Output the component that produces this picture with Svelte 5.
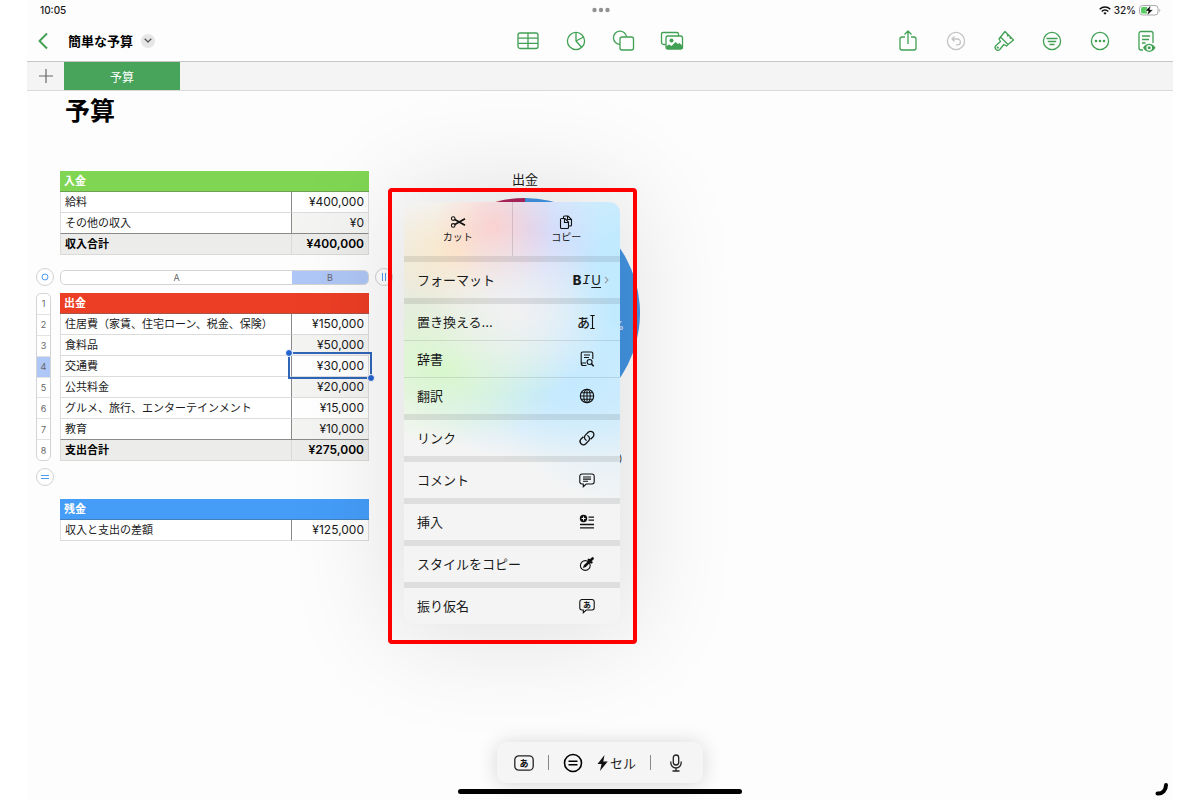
<script lang="ts">
    type Row = { label: string; value: string; total?: boolean; selected?: boolean };

    const income: Row[] = [
        {label: "給料", value: "¥400,000"},
        {label: "その他の収入", value: "¥0"},
        {label: "収入合計", value: "¥400,000", total: true},
    ];

    const expenses: Row[] = [
        {label: "住居費（家賃、住宅ローン、税金、保険）", value: "¥150,000"},
        {label: "食料品", value: "¥50,000"},
        {label: "交通費", value: "¥30,000", selected: true},
        {label: "公共料金", value: "¥20,000"},
        {label: "グルメ、旅行、エンターテインメント", value: "¥15,000"},
        {label: "教育", value: "¥10,000"},
        {label: "支出合計", value: "¥275,000", total: true},
    ];

    const balance: Row[] = [{label: "収入と支出の差額", value: "¥125,000"}];

    const menu = [
        {label: "フォーマット", icon: "biu"},
        {label: "置き換える...", icon: "replace"},
        {label: "辞書", icon: "dictionary", thin: true},
        {label: "翻訳", icon: "globe", thin: true},
        {label: "リンク", icon: "link"},
        {label: "コメント", icon: "comment"},
        {label: "挿入", icon: "insert"},
        {label: "スタイルをコピー", icon: "style"},
        {label: "振り仮名", icon: "furigana"},
    ];

    const amounts = [150, 50, 30, 20, 15, 10];
    const colors = ["#4294e2", "#6cc04a", "#f4c63d", "#ee7f2d", "#d8412f", "#b0265e"];
    const sum = amounts.reduce((a, b) => a + b, 0);

    function point(share: number) {
        const a = share * 2 * Math.PI;
        return `${(115 + 115 * Math.sin(a)).toFixed(2)} ${(115 - 115 * Math.cos(a)).toFixed(2)}`;
    }

    let start = 0;
    const slices = amounts.map((amount, i) => {
        const from = start;
        start += amount / sum;
        const large = amount / sum > 0.5 ? 1 : 0;
        return {d: `M115 115L${point(from)}A115 115 0 ${large} 1 ${point(start)}Z`, color: colors[i]};
    });
</script>

{#snippet sheetTable(title: string, rows: Row[], tone: string)}
    <table class={tone}>
        <colgroup>
            <col>
            <col class="amount">
        </colgroup>
        <thead>
        <tr><th colspan="2">{title}</th></tr>
        </thead>
        <tbody>
        {#each rows as row}
            <tr class:total={row.total}>
                <td class="label">{row.label}</td>
                <td class="value" class:selected={row.selected}>{row.value}{#if row.selected}<span class="selection"><i></i><i></i></span>{/if}</td>
            </tr>
        {/each}
        </tbody>
    </table>
{/snippet}

{#snippet menuIcon(name: string)}
    {#if name === "biu"}
        <span class="biu"><b>B</b><em>I</em><u>U</u></span>
        <svg class="more" width="5" height="8" viewBox="0 0 5 8"><path d="M1 .8l3 3.2-3 3.2"/></svg>
    {:else if name === "replace"}
        <span class="replace">あ<svg width="5" height="16" viewBox="0 0 5 16"><path d="M.3 1.5h4.4M.3 14.5h4.4M2.5 1.5v13"/></svg></span>
    {:else}
        <svg width="16" height="16" viewBox="0 0 16 16">
            {#if name === "dictionary"}
                <path d="M7.500 14.500H4.200a2 2 0 0 1-2-2v-10A1.500 1.500 0 0 1 3.700 1h8.600a1.500 1.500 0 0 1 1.500 1.500V8M2.400 12h4.600M5 4h6M5 6.500h5"/>
                <circle cx="10.600" cy="11" r="2.500"/>
                <path d="M12.400 12.900l2.300 2.300" stroke-width="1.500"/>
            {:else if name === "globe"}
                <circle cx="8" cy="8" r="6.700"/>
                <ellipse cx="8" cy="8" rx="3.200" ry="6.700"/>
                <path d="M8 1.300v13.400M1.300 8h13.400M2.300 4.700h11.400M2.300 11.300h11.400"/>
            {:else if name === "link"}
                <path d="M7.700 10.500a3.300 3.300 0 0 1-1.300-5.400l2.800-2.800a3.300 3.300 0 0 1 4.700 4.700l-2.300 2.300M8.300 5.500a3.300 3.300 0 0 1 1.300 5.400l-2.800 2.800a3.300 3.300 0 0 1-4.700-4.700l2.300-2.300" stroke-width="1.300"/>
            {:else if name === "comment"}
                <path d="M3 2h10a2.200 2.200 0 0 1 2.200 2.200v5.600A2.200 2.200 0 0 1 13 12H7.200l-2.900 2.700V12H3A2.200 2.200 0 0 1 .8 9.800V4.200A2.200 2.200 0 0 1 3 2z"/>
                <path d="M4 5h8M4 7.100h8M4 9.200h5"/>
            {:else if name === "insert"}
                <circle cx="4.500" cy="4.500" r="3.700" fill="#111" stroke="none"/>
                <path d="M4.500 2.500v4M2.500 4.500h4" stroke="#f4f4f4"/>
                <path d="M9.500 3.200h5.500M9.500 6.200h5.500M1 10.500h14M1 13.800h14" stroke-width="1.300"/>
            {:else if name === "style"}
                <circle cx="6.300" cy="9.500" r="4.900"/>
                <path d="M3.800 12l1.200-3 5-4.800 1.800 1.800L6.800 11z" fill="#111" stroke="none"/>
                <path d="M9.800 3.800l2.600 2.600M11.700 4.400l1.900-1.900" stroke-width="2.600" stroke-linecap="round"/>
            {:else if name === "furigana"}
                <path d="M3 1.500h10a2.200 2.200 0 0 1 2.200 2.200v6.100A2.200 2.200 0 0 1 13 12H7.200l-2.900 2.700V12H3A2.200 2.200 0 0 1 .8 9.800V3.700A2.200 2.200 0 0 1 3 1.500z"/>
                <text x="8" y="9.700" text-anchor="middle" font-size="8" font-weight="700">あ</text>
            {/if}
        </svg>
    {/if}
{/snippet}

<div class="app">
    <header>
        <div class="status">
            <span>10:05</span>
            <svg width="18" height="6" viewBox="0 0 18 6" fill="#929292"><circle cx="2.500" cy="3" r="2.200"/><circle cx="9" cy="3" r="2.200"/><circle cx="15.500" cy="3" r="2.200"/></svg>
            <div class="power">
                <svg width="12" height="9" viewBox="0 0 12 9" fill="none" stroke="#111" stroke-width="1.500"><path d="M.7 3.300a7.500 7.500 0 0 1 10.600 0M2.700 5.400a4.600 4.600 0 0 1 6.600 0"/><path d="M6 8.700L4.400 7.100a2.300 2.300 0 0 1 3.200 0z" fill="#111" stroke="none"/></svg>
                <span>32%</span>
                <svg width="22" height="11" viewBox="0 0 22 11"><rect x=".5" y=".5" width="18.500" height="9.500" rx="3" fill="#fff" stroke="#aaa"/><path d="M3.500 2H8v6.500H3.500A1.500 1.500 0 0 1 2 7V3.500A1.500 1.500 0 0 1 3.500 2z" fill="#57cb61"/><path d="M20.300 3.700v3.200c1.400-.5 1.400-2.700 0-3.200z" fill="#aaa"/><path d="M11.800.3L6.300 6h3L8.200 10.500 14 4.700h-3.200z" fill="#000" stroke="#fff" stroke-width=".5"/></svg>
            </div>
        </div>

        <div class="toolbar">
            <div class="group">
                <button class="back" aria-label="戻る"><svg width="10" height="18" viewBox="0 0 10 18"><path d="M9 1.500L1.500 9 9 16.500" stroke-width="2"/></svg></button>
                <h2>簡単な予算</h2>
                <button class="chevron" aria-label="書類メニュー"><svg width="8" height="5" viewBox="0 0 8 5"><path d="M.7.7L4 4 7.300.7" stroke="#555"/></svg></button>
            </div>
            <div class="group tools">
                <button aria-label="表"><svg width="24" height="24" viewBox="0 0 24 24"><rect x="2" y="4" width="20" height="15.500" rx="2"/><path d="M2 9.200h20M2 14.400h20M12 4v15.500"/></svg></button>
                <button aria-label="グラフ"><svg width="24" height="24" viewBox="0 0 24 24"><circle cx="12" cy="12" r="8.600"/><path d="M12 3.400V12l5.500 6.300M12 12l7.500-4"/></svg></button>
                <button aria-label="図形"><svg width="24" height="24" viewBox="0 0 24 24"><path d="M8 15.300a6.600 6.600 0 1 1 6.600-7.300"/><rect x="8" y="8" width="13.500" height="13" rx="2"/></svg></button>
                <button aria-label="メディア"><svg width="24" height="24" viewBox="0 0 24 24"><path d="M5.500 15.500h-2A2 2 0 0 1 1.500 13.500V5a1.500 1.500 0 0 1 1.500-1.500h14A1.500 1.500 0 0 1 18.500 5v2"/><rect x="6" y="7" width="16.500" height="13" rx="2"/><circle cx="11.500" cy="11.500" r="2" fill="#41a054" stroke="none"/><path d="M6 17.500l3-2 2.500 1.500 4-4 2.500 2 1.500-1 3 3V20H7z" fill="#41a054" stroke="none"/></svg></button>
            </div>
            <div class="group actions">
                <button aria-label="共有"><svg width="24" height="24" viewBox="0 0 24 24"><path d="M9 8H6a2 2 0 0 0-2 2v9a2 2 0 0 0 2 2h12a2 2 0 0 0 2-2v-9a2 2 0 0 0-2-2h-3M12 15V2.500M8.500 5.500L12 2l3.500 3.500"/></svg></button>
                <button class="muted" aria-label="取り消す"><svg width="24" height="24" viewBox="0 0 24 24"><circle cx="12" cy="12" r="8.600"/><path d="M10.500 7.500L8 10l2.500 2.500M8 10h5.500a2.900 2.900 0 0 1 0 5.800H12"/></svg></button>
                <button aria-label="フォーマット"><svg width="24" height="24" viewBox="0 0 24 24"><path d="M13 2.500l8.500 8.500-5.500 4.500-7.500-7.500zM15 4.500l1 3M18 7.500l.5 2.500M8.500 8L7 10l1.500 2.500L4 16.500a2.700 2.700 0 0 0 3.800 4l4-5 2.700 1.500 1.500-1.500"/><circle cx="5.800" cy="18.600" r=".5"/></svg></button>
                <button aria-label="整理"><svg width="24" height="24" viewBox="0 0 24 24"><circle cx="12" cy="12" r="8.600"/><path d="M6.500 9.500h11M7.800 12.500h8.400M9.500 15.500h5"/></svg></button>
                <button aria-label="その他"><svg width="24" height="24" viewBox="0 0 24 24"><circle cx="12" cy="12" r="8.600"/><g fill="#41a054" stroke="none"><circle cx="8" cy="12" r="1.300"/><circle cx="12" cy="12" r="1.300"/><circle cx="16" cy="12" r="1.300"/></g></svg></button>
                <button aria-label="閲覧表示"><svg width="20" height="24" viewBox="0 0 20 24"><path d="M7 21H5a2 2 0 0 1-2-2V4.500a2 2 0 0 1 2-2h10a2 2 0 0 1 2 2V14M6 7h8M6 10.500h7M6 14h3.500"/><path d="M7 18.800c3-5.500 9.500-5.500 12.500 0-3 5.500-9.500 5.500-12.500 0z" fill="#41a054" stroke="none"/><circle cx="13.200" cy="18.800" r="2.200" fill="#41a054" stroke="#fff"/></svg></button>
            </div>
        </div>

        <nav>
            <button class="add" aria-label="シートを追加"><svg width="14" height="14" viewBox="0 0 14 14"><path d="M7 0v14M0 7h14" stroke="#666" stroke-width="1.200"/></svg></button>
            <button class="tab">予算</button>
        </nav>
    </header>

    <main>
        <div class="sheet">
            <h1>予算</h1>
            <div class="income">{@render sheetTable("入金", income, "green")}</div>
            <button class="knob" aria-label="表を移動"><svg width="8" height="8" viewBox="0 0 8 8"><circle cx="4" cy="4" r="3"/></svg></button>
            <div class="columns"><button>A</button><button class="active">B</button></div>
            <button class="knob" aria-label="列を追加"><svg width="8" height="8" viewBox="0 0 8 8"><path d="M2.500 0v8M5.500 0v8"/></svg></button>
            <div class="rows">
                {#each [1, 2, 3, 4, 5, 6, 7, 8] as n}
                    <button class:active={n === 4}>{n}</button>
                {/each}
            </div>
            <div class="expenses">{@render sheetTable("出金", expenses, "red")}</div>
            <button class="knob end" aria-label="行を追加"><svg width="8" height="8" viewBox="0 0 8 8"><path d="M0 2.500h8M0 5.500h8"/></svg></button>
            <div class="balance">{@render sheetTable("残金", balance, "blue")}</div>
        </div>

        <figure>
            <figcaption>出金</figcaption>
            <svg width="230" height="230" viewBox="0 0 230 230">
                {#each slices as slice}
                    <path d={slice.d} fill={slice.color}/>
                {/each}
                <text class="share" x="214" y="132" text-anchor="end">55%</text>
            </svg>
            <p>住居費（家賃、住宅ローン、税金、保険）</p>
        </figure>

        <div class="frame">
            <div class="menu">
                <div class="top">
                    <button>
                        <svg width="16" height="14" viewBox="0 0 16 14"><circle cx="3.200" cy="3.600" r="1.800"/><circle cx="3.200" cy="10.400" r="1.800"/><path d="M4.800 4.500L15 10.300M4.800 9.500L15 3.700" stroke-width="1.700"/></svg>
                        カット
                    </button>
                    <button>
                        <svg width="14" height="14" viewBox="0 0 14 14"><path d="M4.500 3.500V2a1 1 0 0 1 1-1H9l3.500 3.500V10a1 1 0 0 1-1 1H9.500M8.500 1v3.500h4"/><path d="M2.500 3.500H6L9.500 7v5.500a1 1 0 0 1-1 1h-6a1 1 0 0 1-1-1v-8a1 1 0 0 1 1-1zM5.500 3.700V7.500h4"/></svg>
                        コピー
                    </button>
                </div>
                {#each menu as item}
                    <button class="item" class:thin={item.thin} class:format={item.icon === "biu"}>
                        <span>{item.label}</span>
                        {@render menuIcon(item.icon)}
                    </button>
                {/each}
            </div>
        </div>
    </main>

    <footer>
        <div class="dock">
            <button aria-label="かな入力"><svg width="20" height="16" viewBox="0 0 20 16"><rect x=".8" y=".8" width="18.400" height="14.400" rx="4"/><text x="10" y="11.500" text-anchor="middle" font-size="9" font-weight="700">あ</text></svg></button>
            <span class="bar"></span>
            <button class="equals" aria-label="数式"><svg width="20" height="20" viewBox="0 0 20 20"><circle cx="10" cy="10" r="8.500"/><path d="M5.500 8.300h9M5.500 11.700h9"/></svg></button>
            <button class="cell"><svg width="11" height="16" viewBox="0 0 11 16"><path d="M7.500 0L.5 9h4L3 16l7.700-9.500H6.300z" fill="#111" stroke="none"/></svg>セル</button>
            <span class="bar"></span>
            <button class="mic" aria-label="音声入力"><svg width="14" height="18" viewBox="0 0 14 18"><rect x="4.300" y="1" width="5.400" height="10" rx="2.700"/><path d="M1.800 7.500v1.300a5.200 5.200 0 0 0 10.400 0V7.500M7 14v3M3.500 17h7"/></svg></button>
        </div>
        <div class="home"></div>
        <svg class="corner" width="14" height="14" viewBox="0 0 14 14"><path d="M2.500 11.500C7.500 12 11 8 11 3" fill="none" stroke="#000" stroke-width="4" stroke-linecap="round"/></svg>
    </footer>
</div>

<style>
    :global(body) {
        background: #fff;
    }

    .app {
        position: relative;
        min-height: 100vh;
        margin: 0 27px;
        background: #fdfdfd;
        color: #1a1a1a;
        font-family: Inter, "Noto Sans CJK JP", sans-serif;
        overflow: hidden;
    }

    button {
        display: flex;
        align-items: center;
        justify-content: center;
        padding: 0;
        border: none;
        background: none;
        color: inherit;
        font: inherit;
        cursor: pointer;
    }

    h1, h2, figure, p {
        margin: 0;
    }

    h1, h2 {
        color: #000;
    }

    svg {
        display: block;
        flex: none;
    }

    .status, .toolbar {
        display: grid;
        grid-template-columns: 1fr auto 1fr;
        align-items: center;
    }

    .status {
        height: 20px;
        padding: 0 12px 0 13px;
        font-size: 10px;
        font-weight: 500;
    }

    .power {
        display: flex;
        justify-content: flex-end;
        align-items: center;
        gap: 3px;
    }

    .toolbar {
        height: 41px;
        padding: 0 17px 0 11px;
    }

    .toolbar svg {
        fill: none;
        stroke: #41a054;
        stroke-width: 1.3;
        stroke-linejoin: round;
    }

    .toolbar .muted svg {
        stroke: #c4c4c4;
    }

    .group {
        display: flex;
        align-items: center;
    }

    .tools, .actions {
        gap: 24px;
    }

    .tools {
        padding-left: 5px;
    }

    .actions {
        justify-content: flex-end;
    }

    h2 {
        margin: 0 8px 0 20px;
        font-size: 13px;
        line-height: 20px;
    }

    .chevron {
        width: 14px;
        height: 14px;
        border-radius: 50%;
        background: #e6e6e6;
    }

    nav {
        display: flex;
        height: 28px;
        border-top: 1px solid #c6c6c6;
        border-bottom: 1px solid #d9d9d9;
        background: #f4f4f4;
    }

    .add {
        width: 37px;
    }

    .tab {
        width: 116px;
        background: #48a45a;
        color: #fff;
        font-size: 12px;
    }

    main {
        position: relative;
        display: flex;
        align-items: flex-start;
    }

    .sheet {
        display: grid;
        grid-template-columns: 18px 309px 18px;
        column-gap: 6px;
        padding-left: 9px;
    }

    h1 {
        grid-column: 2 / 4;
        margin-bottom: 40px;
        padding-left: 5px;
        font-size: 25px;
        line-height: 40px;
    }

    .income {
        grid-column: 2 / 4;
        width: 309px;
        margin-bottom: 13px;
    }

    .expenses, .balance {
        grid-column: 2;
    }

    .balance {
        margin-top: 38px;
    }

    table {
        width: 100%;
        table-layout: fixed;
        border-collapse: separate;
        border-spacing: 0;
        font-size: 11px;
        line-height: 16px;
    }

    .amount {
        width: 77px;
    }

    th, td {
        box-sizing: border-box;
        height: 21px;
        padding: 0 4px;
        white-space: nowrap;
    }

    th {
        border-bottom: 1px solid;
        color: #fff;
        text-align: left;
    }

    .green th {
        background: #80d653;
        border-color: #6da053;
    }

    .red th {
        background: #ec3e25;
        border-color: #a5564a;
    }

    .blue th {
        background: #459df8;
        border-color: #4680bb;
    }

    td {
        border-bottom: 1px solid #dcdcdc;
        background: #fff;
    }

    .label {
        border-left: 1px solid #ddd;
        border-right: 1px solid #8a8a8a;
    }

    .value {
        border-right: 1px solid #ddd;
        font-size: 12px;
        text-align: right;
    }

    .selected {
        position: relative;
    }

    tbody tr:nth-child(even) .value {
        background: #f4f4f3;
    }

    tbody tr:nth-last-child(2) td {
        border-bottom-color: #8a8a8a;
    }

    .total td, tbody .total:nth-child(n) .value {
        background: #ececea;
        border-color: #dadad8;
        color: #000;
        font-weight: 700;
    }

    tbody .total:nth-child(n) .value {
        font-weight: 600;
    }

    .selection {
        position: absolute;
        inset: -4px -4px -3px -4px;
        border: 2px solid #2f66b8;
    }

    .selection i {
        position: absolute;
        width: 6px;
        height: 6px;
        border: 1px solid #fff;
        border-radius: 50%;
        background: #2563cf;
    }

    .selection i:first-child {
        top: -5px;
        left: -5px;
    }

    .selection i:last-child {
        right: -5px;
        bottom: -5px;
    }

    .knob {
        box-sizing: border-box;
        width: 18px;
        height: 18px;
        border: 1px solid #d2d2d2;
        border-radius: 50%;
        background: #fff;
    }

    .knob svg {
        fill: none;
        stroke: #4a9bf0;
    }

    .end {
        grid-column: 1;
        margin-top: 7px;
    }

    .columns, .rows {
        box-sizing: border-box;
        display: flex;
        border: 1px solid #d4d4d4;
        border-radius: 5px;
        background: #fff;
        color: #666;
        font-size: 9px;
        overflow: hidden;
    }

    .columns {
        height: 15px;
        margin: 2px 0 8px;
    }

    .columns button {
        flex: 231;
    }

    .columns .active {
        flex: 76;
    }

    .active {
        background: #afc7f6;
    }

    .rows {
        flex-direction: column;
        width: 15px;
    }

    .rows button {
        flex: 1;
        border-bottom: 1px solid #e2e2e2;
    }

    .rows button:last-child {
        border-bottom: none;
    }

    figure {
        width: 230px;
        margin: 78px 0 0 17px;
    }

    figcaption {
        margin-bottom: 9px;
        font-size: 13px;
        line-height: 20px;
        text-align: center;
    }

    figure p {
        margin-top: 23px;
        padding-right: 11px;
        font-size: 11px;
        line-height: 16px;
        text-align: right;
        white-space: nowrap;
    }

    .frame {
        position: absolute;
        top: 97px;
        left: 361px;
        padding: 14px 17px 20px 16px;
    }

    .frame::after {
        content: "";
        position: absolute;
        inset: 0;
        border: 4px solid #fe0000;
        border-radius: 4px;
        pointer-events: none;
    }

    .menu {
        width: 216px;
        border-radius: 11px;
        background:
            radial-gradient(ellipse 100px 85px at 50% 26%, rgba(243, 241, 242, .95), transparent),
            radial-gradient(ellipse 60px 70px at 42% 6%, rgba(255, 205, 202, .8), transparent),
            radial-gradient(ellipse 70px 80px at 60% 9%, rgba(214, 210, 250, .85), transparent),
            radial-gradient(ellipse 90px 60px at 26% 12%, rgba(255, 228, 190, .8), transparent),
            radial-gradient(ellipse 120px 80px at 20% 39%, rgba(214, 248, 200, .95), transparent),
            radial-gradient(ellipse 160px 230px at 100% 18%, rgb(194, 234, 255) 20%, transparent),
            radial-gradient(ellipse 150px 75px at 68% 44%, rgba(198, 233, 255, .95) 15%, transparent),
            radial-gradient(ellipse 130px 110px at 10% 24%, rgba(226, 232, 218, .8), transparent),
            #f4f4f4;
        box-shadow: 0 0 110px 12px rgba(0, 0, 0, .12);
        overflow: hidden;
    }

    .menu svg {
        fill: none;
        stroke: #111;
        stroke-width: 1.1;
    }

    .menu text, .dock text {
        fill: #111;
        stroke: none;
    }

    .share {
        fill: #e8f0fa;
        font-size: 12px;
    }

    .top {
        display: flex;
        height: 54px;
    }

    .top button {
        flex: 1;
        flex-direction: column;
        gap: 1px;
        font-size: 10px;
        line-height: 14px;
    }

    .top button + button {
        border-left: 1px solid rgba(0, 0, 0, .12);
    }

    .item {
        justify-content: space-between;
        box-sizing: border-box;
        width: 100%;
        height: 42px;
        padding: 0 25px 0 13px;
        border-top: 6px solid rgba(0, 0, 0, .09);
        font-size: 13px;
        line-height: 20px;
    }

    .thin {
        height: 37px;
        border-top: 1px solid rgba(0, 0, 0, .1);
    }

    .format {
        padding-right: 11px;
    }

    .biu {
        display: flex;
        gap: 1px;
        margin-left: auto;
        margin-right: 3px;
        line-height: 16px;
    }

    .biu b {
        font-weight: 800;
    }

    .biu em {
        font-family: "DejaVu Sans Mono", monospace;
    }

    .biu u {
        text-underline-offset: 2px;
    }

    .menu .more {
        stroke: #999;
    }

    .replace {
        display: flex;
        align-items: center;
        font-weight: 500;
    }

    footer {
        position: absolute;
        right: 0;
        bottom: 6px;
        left: 0;
        display: flex;
        flex-direction: column;
        align-items: center;
        gap: 6px;
    }

    .dock {
        box-sizing: border-box;
        display: flex;
        align-items: center;
        gap: 14px;
        width: 206px;
        height: 41px;
        padding: 0 17px;
        border-radius: 9px;
        background: #f5f5f5;
        box-shadow: 0 1px 20px rgba(0, 0, 0, .16);
        font-size: 13px;
    }

    .dock svg {
        fill: none;
        stroke: #222;
        stroke-width: 1.3;
    }

    .dock .equals svg {
        stroke: #000;
        stroke-width: 1.6;
    }

    .cell {
        gap: 2px;
    }

    .mic {
        margin-left: auto;
        margin-right: 3px;
    }

    .bar {
        width: 1px;
        height: 15px;
        background: #888;
    }

    .home {
        width: 284px;
        height: 5px;
        border-radius: 3px;
        background: #000;
    }

    .corner {
        position: absolute;
        right: 4px;
        bottom: -2px;
    }
</style>
